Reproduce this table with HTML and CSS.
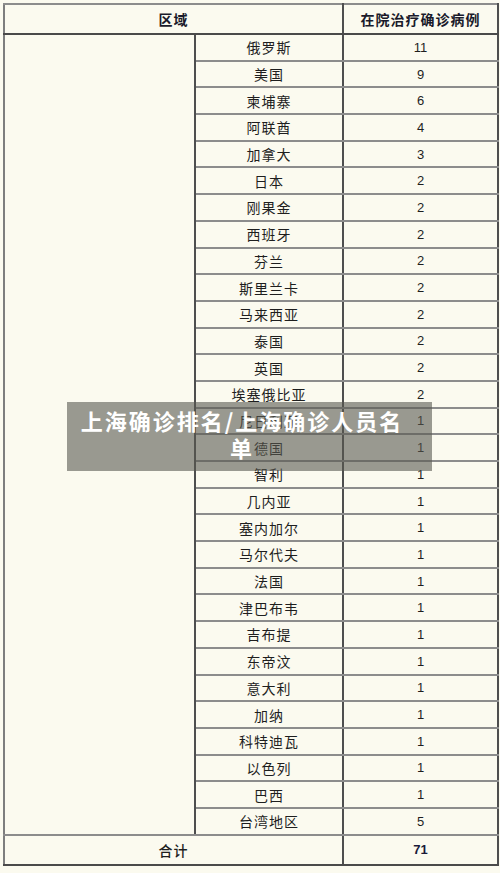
FILE: index.html
```html
<!DOCTYPE html>
<html lang="zh-CN">
<head>
<meta charset="utf-8">
<title>上海确诊排名/上海确诊人员名单</title>
<link rel="stylesheet" href="styles.css">
</head>
<body>
<div class="page">
  <table class="cases">
    <colgroup>
      <col class="col-region">
      <col class="col-country">
      <col class="col-num">
    </colgroup>
    <thead>
      <tr class="head">
        <th colspan="2">区域</th>
        <th>在院治疗确诊病例</th>
      </tr>
    </thead>
    <tbody>
      <tr><td class="blank" rowspan="30"></td><td class="c">俄罗斯</td><td class="n">11</td></tr>
      <tr><td class="c">美国</td><td class="n">9</td></tr>
      <tr><td class="c">柬埔寨</td><td class="n">6</td></tr>
      <tr><td class="c">阿联酋</td><td class="n">4</td></tr>
      <tr><td class="c">加拿大</td><td class="n">3</td></tr>
      <tr><td class="c">日本</td><td class="n">2</td></tr>
      <tr><td class="c">刚果金</td><td class="n">2</td></tr>
      <tr><td class="c">西班牙</td><td class="n">2</td></tr>
      <tr><td class="c">芬兰</td><td class="n">2</td></tr>
      <tr><td class="c">斯里兰卡</td><td class="n">2</td></tr>
      <tr><td class="c">马来西亚</td><td class="n">2</td></tr>
      <tr><td class="c">泰国</td><td class="n">2</td></tr>
      <tr><td class="c">英国</td><td class="n">2</td></tr>
      <tr><td class="c">埃塞俄比亚</td><td class="n">2</td></tr>
      <tr><td class="c">尼日利亚</td><td class="n">1</td></tr>
      <tr><td class="c">德国</td><td class="n">1</td></tr>
      <tr><td class="c">智利</td><td class="n">1</td></tr>
      <tr><td class="c">几内亚</td><td class="n">1</td></tr>
      <tr><td class="c">塞内加尔</td><td class="n">1</td></tr>
      <tr><td class="c">马尔代夫</td><td class="n">1</td></tr>
      <tr><td class="c">法国</td><td class="n">1</td></tr>
      <tr><td class="c">津巴布韦</td><td class="n">1</td></tr>
      <tr><td class="c">吉布提</td><td class="n">1</td></tr>
      <tr><td class="c">东帝汶</td><td class="n">1</td></tr>
      <tr><td class="c">意大利</td><td class="n">1</td></tr>
      <tr><td class="c">加纳</td><td class="n">1</td></tr>
      <tr><td class="c">科特迪瓦</td><td class="n">1</td></tr>
      <tr><td class="c">以色列</td><td class="n">1</td></tr>
      <tr><td class="c">巴西</td><td class="n">1</td></tr>
      <tr><td class="c">台湾地区</td><td class="n">5</td></tr>
    </tbody>
    <tfoot>
      <tr class="total">
        <td colspan="2" class="tlabel">合计</td>
        <td class="n tnum">71</td>
      </tr>
    </tfoot>
  </table>
  <div class="caption">上海确诊排名/上海确诊人员名单</div>
</div>
</body>
</html>
```

FILE: styles.css
```css
html, body {
  margin: 0;
  padding: 0;
  background: #fbfaef;
}

.page {
  position: relative;
  width: 500px;
  height: 873px;
  padding: 3px 0 0 3px;
  box-sizing: border-box;
  font-family: "Noto Sans CJK SC", "Liberation Sans", sans-serif;
  color: #1e1e1e;
}

.cases {
  border-collapse: collapse;
  table-layout: fixed;
  width: 494px;
  border: 2px solid #7e7e7e;
}

.col-region {
  width: 191px;
}

.col-country {
  width: 148px;
}

.col-num {
  width: 155px;
}

.cases th,
.cases td {
  padding: 0;
  text-align: center;
  vertical-align: middle;
  border-top: 2px solid #8c8c8c;
  border-bottom: 2px solid #8c8c8c;
  border-left: 2px solid #4e4e4e;
  border-right: 2px solid #4e4e4e;
}

.cases th:first-child,
.cases td.blank,
.cases td.tlabel {
  border-left: 2px solid #7e7e7e;
}

.head th {
  height: 28px;
  font-size: 14px;
  font-weight: 700;
  color: #1a1a2a;
  letter-spacing: 1px;
  border-bottom: 2px solid #4a4a4a;
}

.cases td.c {
  height: 24.7px;
  font-size: 14px;
  letter-spacing: 1px;
  line-height: 1;
}

.cases td.n {
  font-family: "Liberation Sans", sans-serif;
  font-size: 13px;
  line-height: 1;
}

.total td {
  height: 28px;
  border-top: 2px solid #8c8c8c;
  border-bottom: 2px solid #4a4a4a;
}

.tlabel {
  font-size: 14px;
  font-weight: 500;
  letter-spacing: 1px;
}

.cases td.tnum {
  font-weight: 700;
  color: #1a1a3a;
}

.caption {
  position: absolute;
  left: 67px;
  top: 402px;
  width: 328px;
  height: 64px;
  padding: 5px 26px 0 11px;
  background: rgba(88, 88, 80, 0.6);
  color: #ffffff;
  font-family: "Noto Sans CJK SC", sans-serif;
  font-size: 22px;
  font-weight: 700;
  line-height: 27px;
  letter-spacing: 2px;
  text-align: center;
}
```
